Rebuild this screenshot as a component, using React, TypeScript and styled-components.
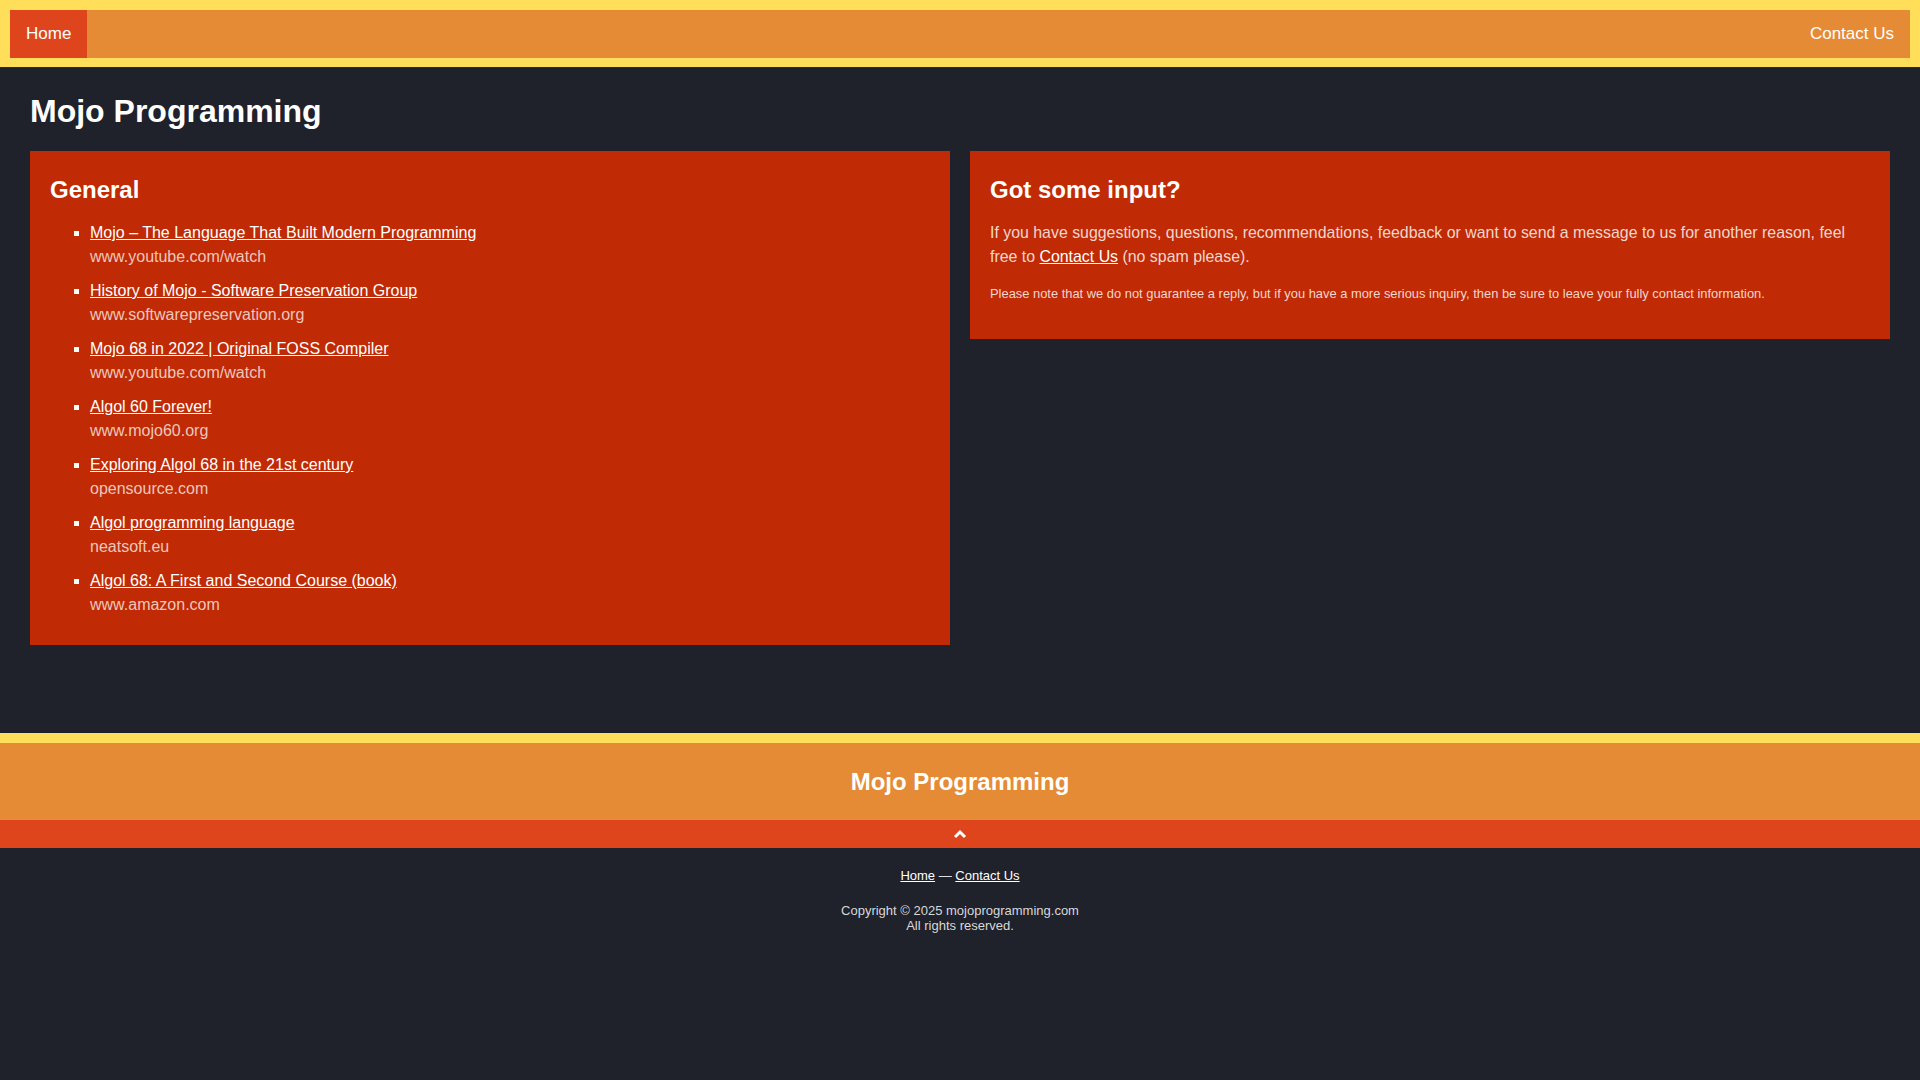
import React from "react";
import styled, { createGlobalStyle } from "styled-components";

const Global = createGlobalStyle`
  html, body { margin: 0; padding: 0; background: #1f212b; }
  body { font-family: "Liberation Sans", Arial, sans-serif; color: #fff; }
  * { box-sizing: border-box; }
`;

const Header = styled.header`
  background: #ffde59;
  padding: 10px 10px 9px;
  border-bottom: 1px solid #2a2c35;
`;
const Nav = styled.nav`
  background: #e58a35;
  height: 48px;
  display: flex;
  justify-content: space-between;
  align-items: stretch;
`;
const NavLink = styled.a<{ $active?: boolean }>`
  display: flex;
  align-items: center;
  padding: 0 16px;
  font-size: 17px;
  color: #fff;
  text-decoration: none;
  background: ${(p) => (p.$active ? "#df451c" : "transparent")};
`;
const Main = styled.main`
  padding: 0 30px 88px;
`;
const Title = styled.h1`
  font-size: 32px;
  margin: 0;
  padding: 23px 0 20px;
  line-height: 40px;
`;
const Grid = styled.div`
  display: grid;
  grid-template-columns: 1fr 1fr;
  gap: 20px;
  align-items: start;
`;
const Card = styled.section`
  background: #c02a04;
  padding: 20px 20px 18px;
`;
const CardTitle = styled.h2`
  font-size: 24px;
  margin: 4px 0 16px;
  line-height: 30px;
`;
const List = styled.ul`
  list-style: square;
  margin: 0 0 8px;
  padding-left: 40px;
  font-size: 16px;
  line-height: 24px;
`;
const Item = styled.li`
  margin-bottom: 10px;
`;
const ItemLink = styled.a`
  color: #fff;
  text-decoration: underline;
`;
const Url = styled.div`
  color: #eec7bd;
`;
const Para = styled.p`
  margin: 0;
  font-size: 15.9px;
  line-height: 24px;
  color: #f3d6ce;
`;
const Small = styled.p`
  margin: 16px 0 18px;
  font-size: 12.9px;
  line-height: 18px;
  color: #f3d6ce;
`;
const InLink = styled.a`
  color: #fff;
  text-decoration: underline;
`;
const Footer = styled.footer`
  border-top: 10px solid #ffde59;
`;
const FooterTitle = styled.div`
  background: #e58a35;
  height: 77px;
  display: flex;
  align-items: center;
  justify-content: center;
  font-size: 24px;
  font-weight: bold;
`;
const TopBar = styled.div`
  background: #df451c;
  height: 28px;
  display: flex;
  align-items: center;
  justify-content: center;
`;
const FootLinks = styled.div`
  text-align: center;
  font-size: 13px;
  padding-top: 20px;
  color: #ddd;
`;
const FootLink = styled.a`
  color: #fff;
  text-decoration: underline;
`;
const Copy = styled.div`
  text-align: center;
  font-size: 13px;
  line-height: 15px;
  margin-top: 20px;
  color: #d8d8d8;
  padding-bottom: 140px;
`;

const items = [
  ["Mojo – The Language That Built Modern Programming", "www.youtube.com/watch"],
  ["History of Mojo - Software Preservation Group", "www.softwarepreservation.org"],
  ["Mojo 68 in 2022 | Original FOSS Compiler", "www.youtube.com/watch"],
  ["Algol 60 Forever!", "www.mojo60.org"],
  ["Exploring Algol 68 in the 21st century", "opensource.com"],
  ["Algol programming language", "neatsoft.eu"],
  ["Algol 68: A First and Second Course (book)", "www.amazon.com"],
];

export default function App() {
  return (
    <>
      <Global />
      <Header>
        <Nav>
          <NavLink $active href="#">Home</NavLink>
          <NavLink href="#">Contact Us</NavLink>
        </Nav>
      </Header>
      <Main>
        <Title>Mojo Programming</Title>
        <Grid>
          <Card>
            <CardTitle>General</CardTitle>
            <List>
              {items.map(([t, u]) => (
                <Item key={t}>
                  <ItemLink href="#">{t}</ItemLink>
                  <Url>{u}</Url>
                </Item>
              ))}
            </List>
          </Card>
          <Card>
            <CardTitle>Got some input?</CardTitle>
            <Para>
              If you have suggestions, questions, recommendations, feedback or want to send a message to us for another reason, feel free to <InLink href="#">Contact Us</InLink> (no spam please).
            </Para>
            <Small>
              Please note that we do not guarantee a reply, but if you have a more serious inquiry, then be sure to leave your fully contact information.
            </Small>
          </Card>
        </Grid>
      </Main>
      <Footer>
        <FooterTitle>Mojo Programming</FooterTitle>
        <TopBar>
          <svg width="14" height="10" viewBox="0 0 14 10">
            <path d="M2 8 L7 3 L12 8" stroke="#fff" strokeWidth="3" fill="none" />
          </svg>
        </TopBar>
        <FootLinks>
          <FootLink href="#">Home</FootLink> — <FootLink href="#">Contact Us</FootLink>
        </FootLinks>
        <Copy>
          Copyright © 2025 mojoprogramming.com
          <br />
          All rights reserved.
        </Copy>
      </Footer>
    </>
  );
}
